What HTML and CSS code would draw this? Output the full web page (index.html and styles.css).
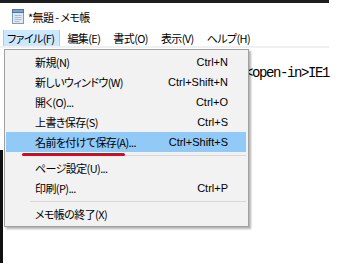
FILE: index.html
```html
<!DOCTYPE html>
<html lang="ja">
<head>
    <meta charset="UTF-8">
    <title>無題 - メモ帳</title>
    <link rel="stylesheet" href="styles.css">
</head>
<body>

    <div class="window">
        <div class="titlebar">
            <svg class="app-icon" width="12" height="15" viewBox="0 0 12 15">
                <rect x="0.5" y="2.5" width="11" height="12" fill="#dde9f4" stroke="#7f9db9"/>
                <rect x="0.5" y="0.5" width="11" height="3" fill="#7aa3d2" stroke="#4f78a8"/>
                <path d="M2.5 6.5h7M2.5 8.5h7M2.5 10.5h7M2.5 12.5h5" stroke="#a9bdd0"/>
            </svg>
            <span class="title">*無題 - メモ帳</span>
        </div>

        <div class="menubar">
            <span class="menubar-item active">ファイル(F)</span>
            <span class="menubar-item">編集(E)</span>
            <span class="menubar-item">書式(O)</span>
            <span class="menubar-item">表示(V)</span>
            <span class="menubar-item">ヘルプ(H)</span>
        </div>

        <div class="editor">
            <div class="editor-line">&lt;open-in&gt;IE1</div>
        </div>

        <!-- File menu, opened -->
        <div class="dropdown">
            <div class="menu-item"><span class="label">新規(N)</span><span class="shortcut">Ctrl+N</span></div>
            <div class="menu-item"><span class="label">新しいウィンドウ(W)</span><span class="shortcut">Ctrl+Shift+N</span></div>
            <div class="menu-item"><span class="label">開く(O)...</span><span class="shortcut">Ctrl+O</span></div>
            <div class="menu-item"><span class="label">上書き保存(S)</span><span class="shortcut">Ctrl+S</span></div>
            <div class="menu-item selected"><span class="label">名前を付けて保存(A)...</span><span class="shortcut">Ctrl+Shift+S</span></div>
            <div class="separator"></div>
            <div class="menu-item"><span class="label">ページ設定(U)...</span></div>
            <div class="menu-item"><span class="label">印刷(P)...</span><span class="shortcut">Ctrl+P</span></div>
            <div class="separator"></div>
            <div class="menu-item"><span class="label">メモ帳の終了(X)</span></div>

            <div class="mark"></div>
        </div>
    </div>

</body>
</html>
```

FILE: styles.css
```css
body {
    margin: 0;
    width: 338px;
    height: 266px;
    overflow: hidden;
    background-color: #ffffff;
    font-family: "Noto Sans CJK JP", "Liberation Sans", sans-serif;
    font-feature-settings: "palt";
    font-size: 11px;
    letter-spacing: -0.6px;
    color: #000000;
}

/* Notepad window */
.window {
    position: relative;
    width: 329px;
    height: 263px;
    border-top: 3px solid #1e1e1e;
}

/* frame edge of the capture, left side */
.window::before {
    content: "";
    position: absolute;
    left: 0;
    top: 147px;
    width: 3px;
    height: 113px;
    background-color: #111111;
}

.titlebar {
    display: flex;
    align-items: center;
    gap: 4px;
    height: 27px;
    padding-left: 12px;
}

.app-icon {
    display: block;
}

.title {
    line-height: 14px;
}

/* Menu bar */
.menubar {
    display: flex;
    height: 16px;
    padding-left: 3px;
    border-bottom: 2px solid #f0f0f0;
}

.menubar-item {
    padding: 0 5px 0 3px;
    margin-right: 3px;
    line-height: 16px;
    border: 1px solid transparent;
    border-top: 0;
    border-bottom: 0;
}

.menubar-item.active {
    background-color: #cce8ff;
    border-color: #99d1ff;
}

/* Text area */
.editor {
    padding: 17px 0 0 245px;
    font-family: "Liberation Mono", monospace;
    font-size: 14px;
    letter-spacing: -1.4px;
    line-height: 16px;
    white-space: nowrap;
}

/* Dropdown */
.dropdown {
    position: absolute;
    left: 4px;
    top: 46px;
    width: 240px;
    padding: 2px 2px 2px 1px;
    background-color: #f2f2f2;
    border: 1px solid #a0a0a0;
    box-shadow: 2px 2px 2px rgba(0,0,0,0.3);
}

.menu-item {
    display: flex;
    justify-content: space-between;
    align-items: center;
    height: 20px;
    padding: 0 18px 0 29px;
}

.menu-item .shortcut {
    font-family: "Liberation Sans", sans-serif;
    letter-spacing: 0;
}

.menu-item.selected {
    background-color: #91c9f7;
}

.separator {
    display: flex;
    align-items: center;
    height: 6px;
}

.separator::after {
    content: "";
    flex-grow: 1;
    height: 1px;
    margin-left: 24px;
    background-color: #d7d7d7;
}

/* red marker under "save as" */
.mark {
    position: absolute;
    left: 17px;
    top: 103px;
    width: 103px;
    height: 3px;
    border-radius: 2px;
    background-color: #e8001c;
}
```
